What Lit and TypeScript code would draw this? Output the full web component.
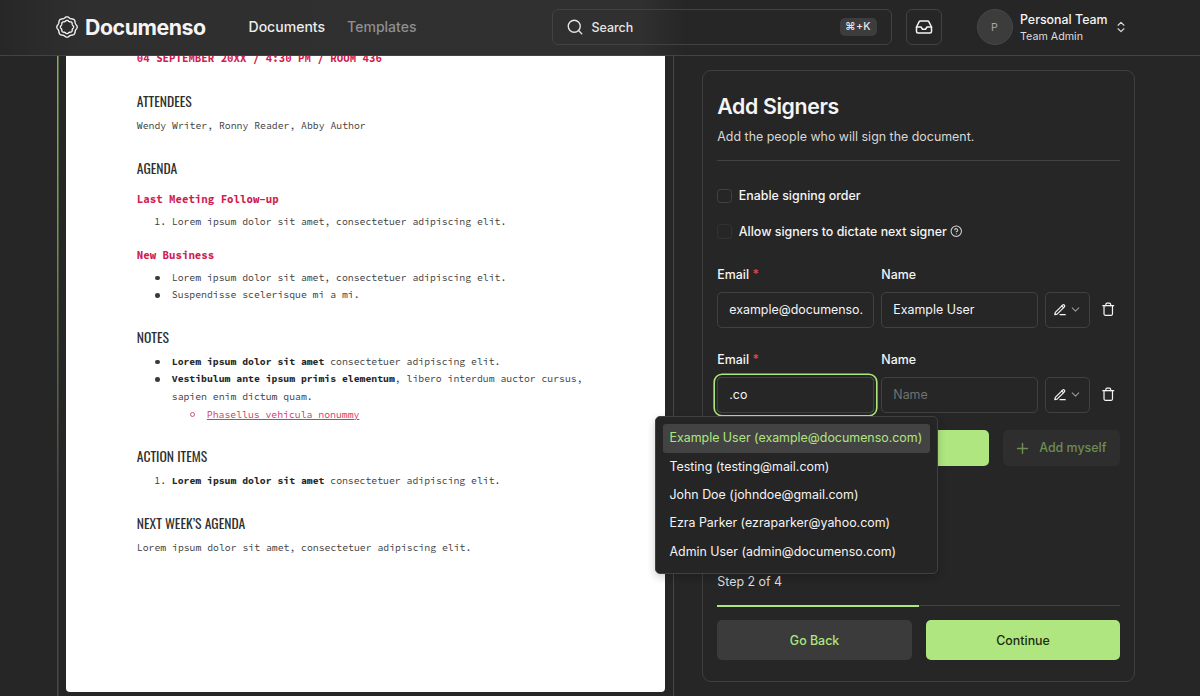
import { LitElement, html, css, svg } from "lit";
import { customElement, state } from "lit/decorators.js";
import { classMap } from "lit/directives/class-map.js";

/** Closed outline of an eight-lobed rosette centred on 12,12. */
const rosette = (radius: number, depth: number, phase: number): string => {
  const points: string[] = [];
  for (let i = 0; i < 96; i++) {
    const a = (i / 96) * Math.PI * 2;
    const r = radius + depth * Math.cos(8 * a + phase);
    points.push(`${(12 + r * Math.cos(a)).toFixed(2)} ${(12 + r * Math.sin(a)).toFixed(2)}`);
  }
  return `M${points.join("L")}Z`;
};

const icons = {
  logo: svg`<path d=${rosette(10.5, 0.6, 0)}/><path d=${rosette(6.8, 0.45, 0)}/>`,
  search: svg`<circle cx="11" cy="11" r="8"/><path d="m21 21-4.3-4.3"/>`,
  inbox: svg`<path d="M22 12h-6l-2 3h-4l-2-3H2"/><path d="M5.45 5.11 2 12v6a2 2 0 0 0 2 2h16a2 2 0 0 0 2-2v-6l-3.45-6.89A2 2 0 0 0 16.76 4H7.24a2 2 0 0 0-1.79 1.11z"/>`,
  updown: svg`<path d="m7 15 5 5 5-5"/><path d="m7 9 5-5 5 5"/>`,
  help: svg`<circle cx="12" cy="12" r="10"/><path d="M9.09 9a3 3 0 0 1 5.83 1c0 2-3 3-3 3"/><path d="M12 17h.01"/>`,
  pen: svg`<path d="M12 20h9"/><path d="M16.5 3.5a2.12 2.12 0 0 1 3 3L7 19l-4 1 1-4Z"/><path d="m15 5 3 3"/>`,
  down: svg`<path d="m6 9 6 6 6-6"/>`,
  trash: svg`<path d="M3 6h18"/><path d="M19 6v14a2 2 0 0 1-2 2H7a2 2 0 0 1-2-2V6"/><path d="M8 6V4a2 2 0 0 1 2-2h4a2 2 0 0 1 2 2v2"/>`,
  plus: svg`<path d="M5 12h14"/><path d="M12 5v14"/>`,
};

const icon = (name: keyof typeof icons, cls: string) =>
  html`<svg class="icon ${cls}" viewBox="0 0 24 24" aria-hidden="true">${icons[name]}</svg>`;

const iconStyles = css`
  .icon {
    display: block;
    flex: none;
    fill: none;
    stroke: currentColor;
    stroke-width: 2;
    stroke-linecap: round;
    stroke-linejoin: round;
  }
`;

@customElement("site-header")
class SiteHeader extends LitElement {
  static styles = [
    iconStyles,
    css`
      :host {
        display: flex;
        align-items: center;
        box-sizing: border-box;
        height: 56px;
        padding: 0 73px 1px 56px;
        border-bottom: 1px solid #434343;
        background: linear-gradient(90deg, #272727 0, #2f2f2f 80px, #303030 640px, #262626 685px);
        color: #f4f4f4;
      }
      .logo { width: 22px; height: 22px; stroke-width: 1.5; }
      .word { width: 120px; margin-left: 7px; font-size: 21.3px; font-weight: 700; letter-spacing: -0.44px; line-height: 26px; white-space: nowrap; }
      .nav { display: flex; gap: 22px; width: 303px; margin: 0 0 1px 43.5px; font-size: 14.05px; font-weight: 500; }
      .active { color: #ececec; }
      .muted { color: #8f8f8f; }
      .search {
        display: flex;
        align-items: center;
        box-sizing: border-box;
        width: 340px;
        height: 36px;
        padding: 0 14px 0 13.5px;
        border: 1px solid #424242;
        border-radius: 6px;
        font-size: 12.45px;
        font-weight: 500;
        color: #e6e6e6;
      }
      .s-icon { width: 18px; height: 18px; margin-right: 7.5px; stroke-width: 1.8; }
      .kbd { margin-left: auto; box-sizing: border-box; width: 37px; height: 18px; border-radius: 5px; background: #3d3d3d; font-size: 10.7px; line-height: 18px; text-align: center; letter-spacing: 0.3px; }
      .inbox { display: flex; align-items: center; justify-content: center; box-sizing: border-box; width: 36px; height: 36px; margin-left: 14px; border: 1px solid #424242; border-radius: 6px; }
      .i-icon { width: 18px; height: 18px; }
      .avatar { box-sizing: border-box; width: 36px; height: 36px; margin-left: 35px; border: 1px solid #484848; border-radius: 50%; background: #3c3c3c; color: #a5a5b0; font-size: 10.6px; line-height: 35px; text-align: center; }
      .team { display: flex; flex-direction: column; width: 94px; margin: 2px 0 0 7.5px; white-space: nowrap; }
      .name { font-size: 12.4px; font-weight: 500; line-height: 16px; }
      .role { font-size: 10.7px; line-height: 17px; color: #dedede; }
      .u-icon { width: 14px; height: 14px; color: #dadada; }
    `,
  ];

  render() {
    return html`
      ${icon("logo", "logo")}
      <span class="word">Documenso</span>
      <nav class="nav"><span class="active">Documents</span><span class="muted">Templates</span></nav>
      <div class="search">${icon("search", "s-icon")}<span>Search</span><span class="kbd">⌘+K</span></div>
      <div class="inbox">${icon("inbox", "i-icon")}</div>
      <div class="avatar">P</div>
      <div class="team"><span class="name">Personal Team</span><span class="role">Team Admin</span></div>
      ${icon("updown", "u-icon")}
    `;
  }
}

@customElement("document-preview")
class DocumentPreview extends LitElement {
  static styles = css`
    :host {
      display: block;
      box-sizing: border-box;
      width: 617px;
      height: 660px;
      padding: 0 8px 0 9px;
      background:
        linear-gradient(#84b05c, #759e50 150px, #586e45 300px, #474747 440px) left / 1.5px 100% no-repeat,
        linear-gradient(#474747, #474747) right / 1px 100% no-repeat;
    }
    .page {
      display: flow-root;
      box-sizing: border-box;
      width: 599px;
      height: 636px;
      padding-left: 70.8px;
      border-radius: 0 0 4px 4px;
      background: #fff;
      color: #3c3c3c;
      font: 9.79px/17.6px "Source Code Pro", "DejaVu Sans Mono", monospace;
      white-space: nowrap;
    }
    .date, .sub { color: #d01c4f; font-size: 10.76px; font-weight: 700; }
    .date { margin-top: -6px; padding-bottom: 1.2px; }
    .sub { margin-top: 13.2px; }
    .next { margin-top: 16.4px; }
    .head {
      height: 20px;
      margin-top: 23px;
      color: #2e2e2e;
      font: 400 13.65px/20px Oswald, "Open Sans Condensed", "Liberation Sans Narrow", sans-serif;
    }
    .date + .head { margin-top: 22.6px; }
    .text, .list { margin-top: 5.9px; }
    .sub + .list { margin-top: 4.3px; }
    .item { display: flex; }
    .mark { box-sizing: border-box; width: 35px; padding-left: 17.5px; }
    .dot { width: 4.6px; height: 4.6px; margin: 7px 12.2px 0 18.2px; border-radius: 50%; background: #3a3a3a; }
    .ring { box-sizing: border-box; width: 5px; height: 5px; margin: 6.6px 12px 0 53px; border: 1px solid #dc5178; border-radius: 50%; }
    .item b { color: #262626; }
    .link { color: #d9356a; text-decoration: underline; }
  `;

  render() {
    return html`<article class="page">
      <div class="date">04 SEPTEMBER 20XX / 4:30 PM / ROOM 436</div>
      <div class="head">ATTENDEES</div>
      <div class="text">Wendy Writer, Ronny Reader, Abby Author</div>
      <div class="head">AGENDA</div>
      <div class="sub">Last Meeting Follow-up</div>
      <div class="list">
        <div class="item"><span class="mark">1.</span><span>Lorem ipsum dolor sit amet, consectetuer adipiscing elit.</span></div>
      </div>
      <div class="sub next">New Business</div>
      <div class="list">
        <div class="item"><i class="dot"></i><span>Lorem ipsum dolor sit amet, consectetuer adipiscing elit.</span></div>
        <div class="item"><i class="dot"></i><span>Suspendisse scelerisque mi a mi.</span></div>
      </div>
      <div class="head">NOTES</div>
      <div class="list">
        <div class="item"><i class="dot"></i><span><b>Lorem ipsum dolor sit amet</b> consectetuer adipiscing elit.</span></div>
        <div class="item"><i class="dot"></i><span><b>Vestibulum ante ipsum primis elementum</b>, libero interdum auctor cursus,<br />sapien enim dictum quam.</span></div>
        <div class="item"><i class="ring"></i><span class="link">Phasellus vehicula nonummy</span></div>
      </div>
      <div class="head">ACTION ITEMS</div>
      <div class="list">
        <div class="item"><span class="mark">1.</span><span><b>Lorem ipsum dolor sit amet</b> consectetuer adipiscing elit.</span></div>
      </div>
      <div class="head">NEXT WEEK’S AGENDA</div>
      <div class="text">Lorem ipsum dolor sit amet, consectetuer adipiscing elit.</div>
    </article>`;
  }
}

interface Signer {
  email: string;
  name: string;
}

@customElement("signers-panel")
class SignersPanel extends LitElement {
  static styles = [
    iconStyles,
    css`
      :host {
        display: flex;
        flex-direction: column;
        box-sizing: border-box;
        width: 433px;
        height: 612px;
        padding: 20px 14px 0;
        border: 1px solid #3f3f3f;
        border-radius: 9px;
        color: #f5f5f5;
        font-size: 12.42px;
        line-height: 18px;
      }
      .title { height: 30px; font-size: 21.3px; font-weight: 600; line-height: 30px; letter-spacing: -0.37px; }
      .lead { margin-top: 7px; color: #d8d8d8; letter-spacing: 0.01px; }
      .rule { height: 1px; margin: 14px 0 26px; background: #424242; }
      .option { display: flex; align-items: center; height: 18px; margin-bottom: 17.5px; font-weight: 500; }
      .box { box-sizing: border-box; width: 14.5px; height: 14.5px; margin-right: 7px; border: 1px solid #424242; border-radius: 3.5px; }
      .dim { border-color: #333; }
      .h-icon { width: 12.5px; height: 12.5px; margin-left: 3.5px; color: #d6d6d6; }
      .rows { display: flex; flex-direction: column; gap: 23px; margin-top: 7.5px; }
      .row { display: grid; grid-template-columns: 157px 157px 44.5px 23px; column-gap: 7px; row-gap: 9px; height: 62px; grid-template-rows: 17px 36px; }
      .label { font-weight: 500; line-height: 17px; }
      .req { color: #e0484d; }
      .wide { grid-column: span 3; }
      .field { position: relative; box-sizing: border-box; height: 36px; padding: 0 10px 0 11px; border: 1px solid #414141; border-radius: 5px; line-height: 34px; white-space: nowrap; }
      .focus { box-shadow: 0 0 0 2px #262626, 0 0 0 3.6px #aee67e; }
      .empty { color: #717171; }
      .role { display: flex; align-items: center; justify-content: center; gap: 2px; }
      .select { padding: 0 4px 0 4px; }
      .p-icon { width: 14px; height: 14px; }
      .d-icon { width: 13px; height: 13px; color: #989898; }
      .t-icon { width: 14.5px; height: 14.5px; align-self: center; justify-self: center; }
      .adders { display: flex; gap: 14px; margin-top: 17.5px; }
      .add { flex: 1; height: 36px; border-radius: 5px; background: #b0e680; }
      .self { display: flex; align-items: center; justify-content: center; box-sizing: border-box; width: 117px; height: 36px; gap: 8px; padding-right: 3px; border-radius: 5px; background: #2e2e2e; color: #6e8c54; font-size: 12.42px; font-weight: 500; }
      .a-icon { width: 17px; height: 17px; }
      .step { margin-top: 106.5px; color: #dedede; }
      .track { height: 1px; margin-top: 14px; background: #424242; }
      .bar { width: 50%; height: 2px; background: #aee67e; }
      .actions { display: grid; grid-template-columns: 1fr 1fr; gap: 14px; margin-top: 14.5px; }
      .btn { height: 39.5px; border-radius: 5px; font-weight: 500; line-height: 41px; text-align: center; }
      .back { background: #3b3b3b; color: #b0e680; }
      .go { background: #b0e680; color: #1c2c10; }
      .menu {
        position: absolute;
        z-index: 2;
        top: 38.5px;
        left: -63.5px;
        box-sizing: border-box;
        width: 283px;
        height: 158px;
        padding: 7.2px 7px;
        border: 1px solid #404040;
        border-radius: 5px;
        background: #252525;
        box-shadow: 0 3px 8px rgba(0, 0, 0, 0.2);
        color: #f4f4f4;
      }
      .choice { height: 28.35px; padding-left: 6.7px; border-radius: 3px; line-height: 28.2px; }
      .picked { background: #434343; color: #b0e680; }
    `,
  ];

  @state() private signers: Signer[] = [
    { email: "example@documenso.", name: "Example User" },
    { email: ".co", name: "" },
  ];

  @state() private focused = 1;

  private suggestions = [
    "Example User (example@documenso.com)",
    "Testing (testing@mail.com)",
    "John Doe (johndoe@gmail.com)",
    "Ezra Parker (ezraparker@yahoo.com)",
    "Admin User (admin@documenso.com)",
  ];

  private menu() {
    return html`<div class="menu">
      ${this.suggestions.map((s, i) => html`<div class=${classMap({ choice: true, picked: i === 0 })}>${s}</div>`)}
    </div>`;
  }

  private row(signer: Signer, index: number) {
    const open = index === this.focused;
    return html`<div class="row">
      <span class="label">Email <span class="req">*</span></span>
      <span class="label wide">Name</span>
      <div class=${classMap({ field: true, focus: open })}>${signer.email}${open ? this.menu() : ""}</div>
      <div class=${classMap({ field: true, empty: !signer.name })}>${signer.name || "Name"}</div>
      <div class="field select role">${icon("pen", "p-icon")}${icon("down", "d-icon")}</div>
      ${icon("trash", "t-icon")}
    </div>`;
  }

  render() {
    return html`
      <div class="title">Add Signers</div>
      <div class="lead">Add the people who will sign the document.</div>
      <div class="rule"></div>
      <div class="option"><span class="box"></span>Enable signing order</div>
      <div class="option"><span class="box dim"></span>Allow signers to dictate next signer ${icon("help", "h-icon")}</div>
      <div class="rows">${this.signers.map((s, i) => this.row(s, i))}</div>
      <div class="adders">
        <div class="add"></div>
        <div class="self">${icon("plus", "a-icon")}<span>Add myself</span></div>
      </div>
      <div class="step">Step 2 of 4</div>
      <div class="track"><div class="bar"></div></div>
      <div class="actions"><div class="btn back">Go Back</div><div class="btn go">Continue</div></div>
    `;
  }
}

@customElement("app-root")
class AppRoot extends LitElement {
  static styles = css`
    :host {
      display: grid;
      grid-template-rows: 56px 640px;
      width: 1200px;
      height: 696px;
      overflow: hidden;
      background: #262626;
      font-family: Inter, sans-serif;
    }
    .main { display: flex; align-items: flex-start; overflow: hidden; padding-left: 57px; }
    .side { padding: 14px 0 0 28.3px; }
  `;

  render() {
    return html`
      <site-header></site-header>
      <main class="main">
        <document-preview></document-preview>
        <div class="side"><signers-panel></signers-panel></div>
      </main>
    `;
  }
}
